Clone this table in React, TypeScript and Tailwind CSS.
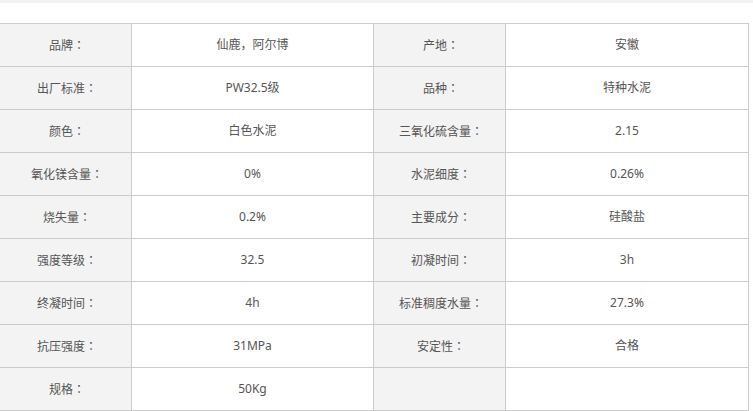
import React from "react";

const rows: [string, string, string, string][] = [
  ["品牌", "仙鹿，阿尔博", "产地", "安徽"],
  ["出厂标准", "PW32.5级", "品种", "特种水泥"],
  ["颜色", "白色水泥", "三氧化硫含量", "2.15"],
  ["氧化镁含量", "0%", "水泥细度", "0.26%"],
  ["烧失量", "0.2%", "主要成分", "硅酸盐"],
  ["强度等级", "32.5", "初凝时间", "3h"],
  ["终凝时间", "4h", "标准稠度水量", "27.3%"],
  ["抗压强度", "31MPa", "安定性", "合格"],
  ["规格", "50Kg", "", ""],
];

function Label({ text }: { text: string }) {
  if (!text) return null;
  return (
    <span>
      {text}
      <span style={{ fontFamily: '"Noto Sans CJK TC", sans-serif' }}>：</span>
    </span>
  );
}

export default function App() {
  return (
    <div
      className="w-[753px] h-[411px] overflow-hidden bg-white text-[12px] text-[#555]"
      style={{ fontFamily: '"Noto Sans", "Noto Sans CJK SC", sans-serif' }}
    >
      {/* top strip */}
      <div className="h-[3px] bg-[#f2f2f2]" />

      {/* spec table */}
      <div className="mt-[20px] ml-[-1px] w-[750px] border-t border-l border-[#cccccc] grid grid-cols-[132px_242px_132px_243px]">
        {rows.map((r, i) => (
          <React.Fragment key={i}>
            <div className="h-[43px] pl-[3px] flex items-center justify-center bg-[#f3f3f3] border-r border-b border-[#cccccc]">
              <Label text={r[0]} />
            </div>
            <div className="h-[43px] flex items-center justify-center bg-white border-r border-b border-[#cccccc]">
              {r[1]}
            </div>
            <div className="h-[43px] pl-[3px] flex items-center justify-center bg-[#f3f3f3] border-r border-b border-[#cccccc]">
              <Label text={r[2]} />
            </div>
            <div className="h-[43px] flex items-center justify-center bg-white border-r border-b border-[#cccccc]">
              {r[3]}
            </div>
          </React.Fragment>
        ))}
      </div>
    </div>
  );
}
